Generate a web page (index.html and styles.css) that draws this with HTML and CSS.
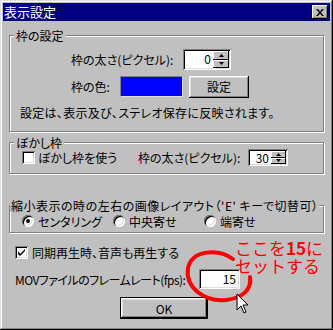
FILE: index.html
```html
<html>
    <head>
        <link rel="stylesheet" href="styles.css">
    </head>
    <body>
        <div class="window">
            <div class="titlebar">
                <span class="title">表示設定</span>
                <span class="close">
                    <svg width="8" height="7" viewBox="0 0 8 7"><path d="M0 0h2l2 2.5 2-2.5h2l-3 3.5 3 3.5h-2l-2-2.5-2 2.5h-2l3-3.5z" fill="#000"/></svg>
                </span>
            </div>
            <div class="content">
                <fieldset class="group group-frame">
                    <legend>枠の設定</legend>
                    <div class="row row-width">
                        <span class="lbl-width">枠の太さ(ピクセル):</span>
                        <div class="spin spin-main">
                            <span class="value">0</span>
                            <span class="arrows">
                                <span class="arrow"><svg width="5" height="3"><path d="M2.5 0L5 3H0z"/></svg></span>
                                <span class="arrow"><svg width="5" height="3"><path d="M0 0h5L2.5 3z"/></svg></span>
                            </span>
                        </div>
                    </div>
                    <div class="row row-color">
                        <span class="lbl-color">枠の色:</span>
                        <span class="swatch"></span>
                        <span class="btn btn-set">設定</span>
                    </div>
                    <p class="note">設定は、表示及び、ステレオ保存に反映されます。</p>
                </fieldset>

                <fieldset class="group group-blur">
                    <legend>ぼかし枠</legend>
                    <div class="row row-blur">
                        <span class="check"></span>
                        <span class="lbl-blur">ぼかし枠を使う</span>
                        <span class="lbl-width2">枠の太さ(ピクセル):</span>
                        <div class="spin spin-small">
                            <span class="value">30</span>
                            <span class="arrows">
                                <span class="arrow"><svg width="5" height="3"><path d="M2.5 0L5 3H0z"/></svg></span>
                                <span class="arrow"><svg width="5" height="3"><path d="M0 0h5L2.5 3z"/></svg></span>
                            </span>
                        </div>
                    </div>
                </fieldset>

                <fieldset class="group group-layout">
                    <legend>縮小表示の時の左右の画像レイアウト（'E' キーで切替可）</legend>
                    <div class="row row-radio">
                        <span class="option"><span class="radio selected"></span>センタリング</span>
                        <span class="option"><span class="radio"></span>中央寄せ</span>
                        <span class="option"><span class="radio"></span>端寄せ</span>
                    </div>
                </fieldset>

                <div class="row row-sync">
                    <span class="check checked">
                        <svg width="7" height="7" viewBox="0 0 7 7"><path d="M0 2v3l2 2 5-5v-2l-5 5z" fill="#000"/></svg>
                    </span>
                    <span>同期再生時、音声も再生する</span>
                </div>

                <div class="row row-mov">
                    <span class="lbl-mov">MOVファイルのフレームレート(fps):</span>
                    <span class="field">15</span>
                </div>

                <div class="row row-ok">
                    <span class="btn btn-ok">OK</span>
                </div>
            </div>

            <svg class="marks" width="333" height="330" viewBox="0 0 333 330">
                <path d="M233 259 C218 248 192 250 188 268 C185 288 205 302 226 300 C242 298 252 290 250 277" fill="none" stroke="#ff0000" stroke-width="4" stroke-linecap="round"/>
                <path d="M237 294 v16 l4 -4 l3 7 l2 -1 l-3 -7 h5 z" fill="#fff" stroke="#000" stroke-width="1" stroke-linejoin="miter"/>
            </svg>
            <div class="memo">
                <div class="memo-line">ここを<b>15</b>に</div>
                <div class="memo-line">セットする</div>
            </div>
        </div>
    </body>
</html>
```

FILE: styles.css
```css
body {
    margin: 0;
    background: #c0c0c0;
    font-family: "Noto Sans CJK JP", sans-serif;
    font-size: 12px;
    font-feature-settings: "palt";
    color: #000;
}

.window {
    position: relative;
    width: 333px;
    height: 330px;
    box-sizing: border-box;
    padding: 3px;
    background: #c0c0c0;
    box-shadow: inset -1px -1px #000, inset 1px 1px #dfdfdf, inset -2px -2px #808080, inset 2px 2px #fff;
}

.titlebar {
    height: 18px;
    background: #000080;
    color: #fff;
    display: flex;
    align-items: center;
    justify-content: space-between;
    padding: 0 2px 0 1px;
}

.title {
    font-size: 13px;
    line-height: 18px;
}

.close {
    width: 16px;
    height: 14px;
    background: #c0c0c0;
    display: flex;
    align-items: center;
    justify-content: center;
    box-shadow: inset -1px -1px #000, inset 1px 1px #fff, inset -2px -2px #808080;
}

.content {
    padding: 0 6px;
}

/* group boxes */
.group {
    margin: 0;
    padding: 0;
    min-width: 0;
    border: 1px solid #808080;
    box-shadow: inset 1px 1px #fff, 1px 1px #fff;
}

.group legend {
    padding: 0 2px;
    margin-left: 4px;
    line-height: 13px;
    height: 13px;
    background: #c0c0c0;
}

.row {
    display: flex;
    align-items: center;
}

.group-frame {
    margin-top: 8px;
    padding-bottom: 11px;
}

.row-width {
    margin: 7px 0 0 61px;
    height: 21px;
}

.lbl-width {
    width: 112px;
}

.row-color {
    margin: 6px 0 0 61px;
    height: 21px;
}

.lbl-color {
    width: 49px;
}

.swatch {
    width: 61px;
    height: 19px;
    background: #0000ff;
    border: 1px solid #808080;
    border-right-color: #dfdfdf;
    border-bottom-color: #dfdfdf;
}

.note {
    margin: 9px 0 0 10px;
    line-height: 14px;
    letter-spacing: 0.3px;
}

.group-blur {
    margin-top: 4px;
    padding-bottom: 7px;
}

.row-blur {
    height: 17px;
    margin-left: 12px;
}

.lbl-blur {
    width: 100px;
    margin-left: 3px;
}

.lbl-width2 {
    width: 110px;
}

.group-layout {
    margin-top: 25px;
    padding-bottom: 4px;
}

.group-layout legend {
    margin-left: 0;
    padding: 0 1px;
    letter-spacing: 0.5px;
}

.row-radio {
    margin: 2px 0 0 12px;
    height: 14px;
}

.option {
    width: 91px;
    display: flex;
    align-items: center;
    gap: 4px;
}

/* controls */
.spin {
    display: flex;
    box-sizing: border-box;
    padding: 2px;
    background: #fff;
    box-shadow: inset 1px 1px #808080, inset -1px -1px #fff, inset 2px 2px #000, inset -2px -2px #dfdfdf;
}

.spin-main {
    width: 48px;
    height: 21px;
}

.spin-small {
    width: 40px;
    height: 17px;
}

.spin .value {
    flex: 1;
    text-align: right;
    padding-right: 2px;
    line-height: 16px;
}

.spin-small .value {
    line-height: 13px;
}

.arrows {
    width: 16px;
    display: flex;
    flex-direction: column;
}

.spin-small .arrows {
    width: 15px;
}

.arrow {
    flex: 1;
    display: flex;
    align-items: center;
    justify-content: center;
    background: #c0c0c0;
    box-shadow: inset -1px -1px #000, inset 1px 1px #fff;
}

.arrow svg {
    display: block;
}

.check {
    width: 13px;
    height: 13px;
    box-sizing: border-box;
    background: #fff;
    display: flex;
    align-items: center;
    justify-content: center;
    box-shadow: inset 1px 1px #808080, inset -1px -1px #fff, inset 2px 2px #000, inset -2px -2px #dfdfdf;
}

.radio {
    width: 12px;
    height: 12px;
    box-sizing: border-box;
    border-radius: 50%;
    background: #fff;
    display: flex;
    align-items: center;
    justify-content: center;
    box-shadow: inset 1px 1px #808080, inset -1px -1px #fff, inset 2px 2px #000, inset -2px -2px #dfdfdf;
}

.radio.selected::after {
    content: '';
    width: 4px;
    height: 4px;
    border-radius: 50%;
    background: #000;
}

.btn {
    display: flex;
    align-items: center;
    justify-content: center;
    box-sizing: border-box;
    background: #c0c0c0;
    box-shadow: inset -1px -1px #000, inset 1px 1px #fff, inset -2px -2px #808080, inset 2px 2px #dfdfdf;
}

.btn-set {
    width: 60px;
    height: 22px;
    margin-left: 6px;
}

.row-sync {
    margin: 13px 0 0 6px;
    height: 13px;
    gap: 4px;
}

.row-mov {
    margin: 10px 0 0 6px;
    height: 20px;
}

.lbl-mov {
    width: 184px;
    white-space: nowrap;
    letter-spacing: -0.55px;
}

.field {
    width: 41px;
    height: 20px;
    box-sizing: border-box;
    background: #fff;
    text-align: right;
    padding-right: 4px;
    line-height: 20px;
    box-shadow: inset 1px 1px #808080, inset -1px -1px #fff, inset 2px 2px #000, inset -2px -2px #dfdfdf;
}

.row-ok {
    margin: 8px 0 0 111px;
}

.btn-ok {
    width: 88px;
    height: 22px;
    border: 1px solid #000;
}

/* annotation drawn on top of the dialog */
.marks {
    position: absolute;
    left: 0;
    top: 0;
    pointer-events: none;
}

.memo {
    position: absolute;
    left: 235px;
    top: 239px;
    color: #ff0000;
    font-size: 17px;
    font-feature-settings: normal;
}

.memo-line {
    height: 18px;
    line-height: 18px;
}

.memo b {
    font-weight: 700;
}
```
